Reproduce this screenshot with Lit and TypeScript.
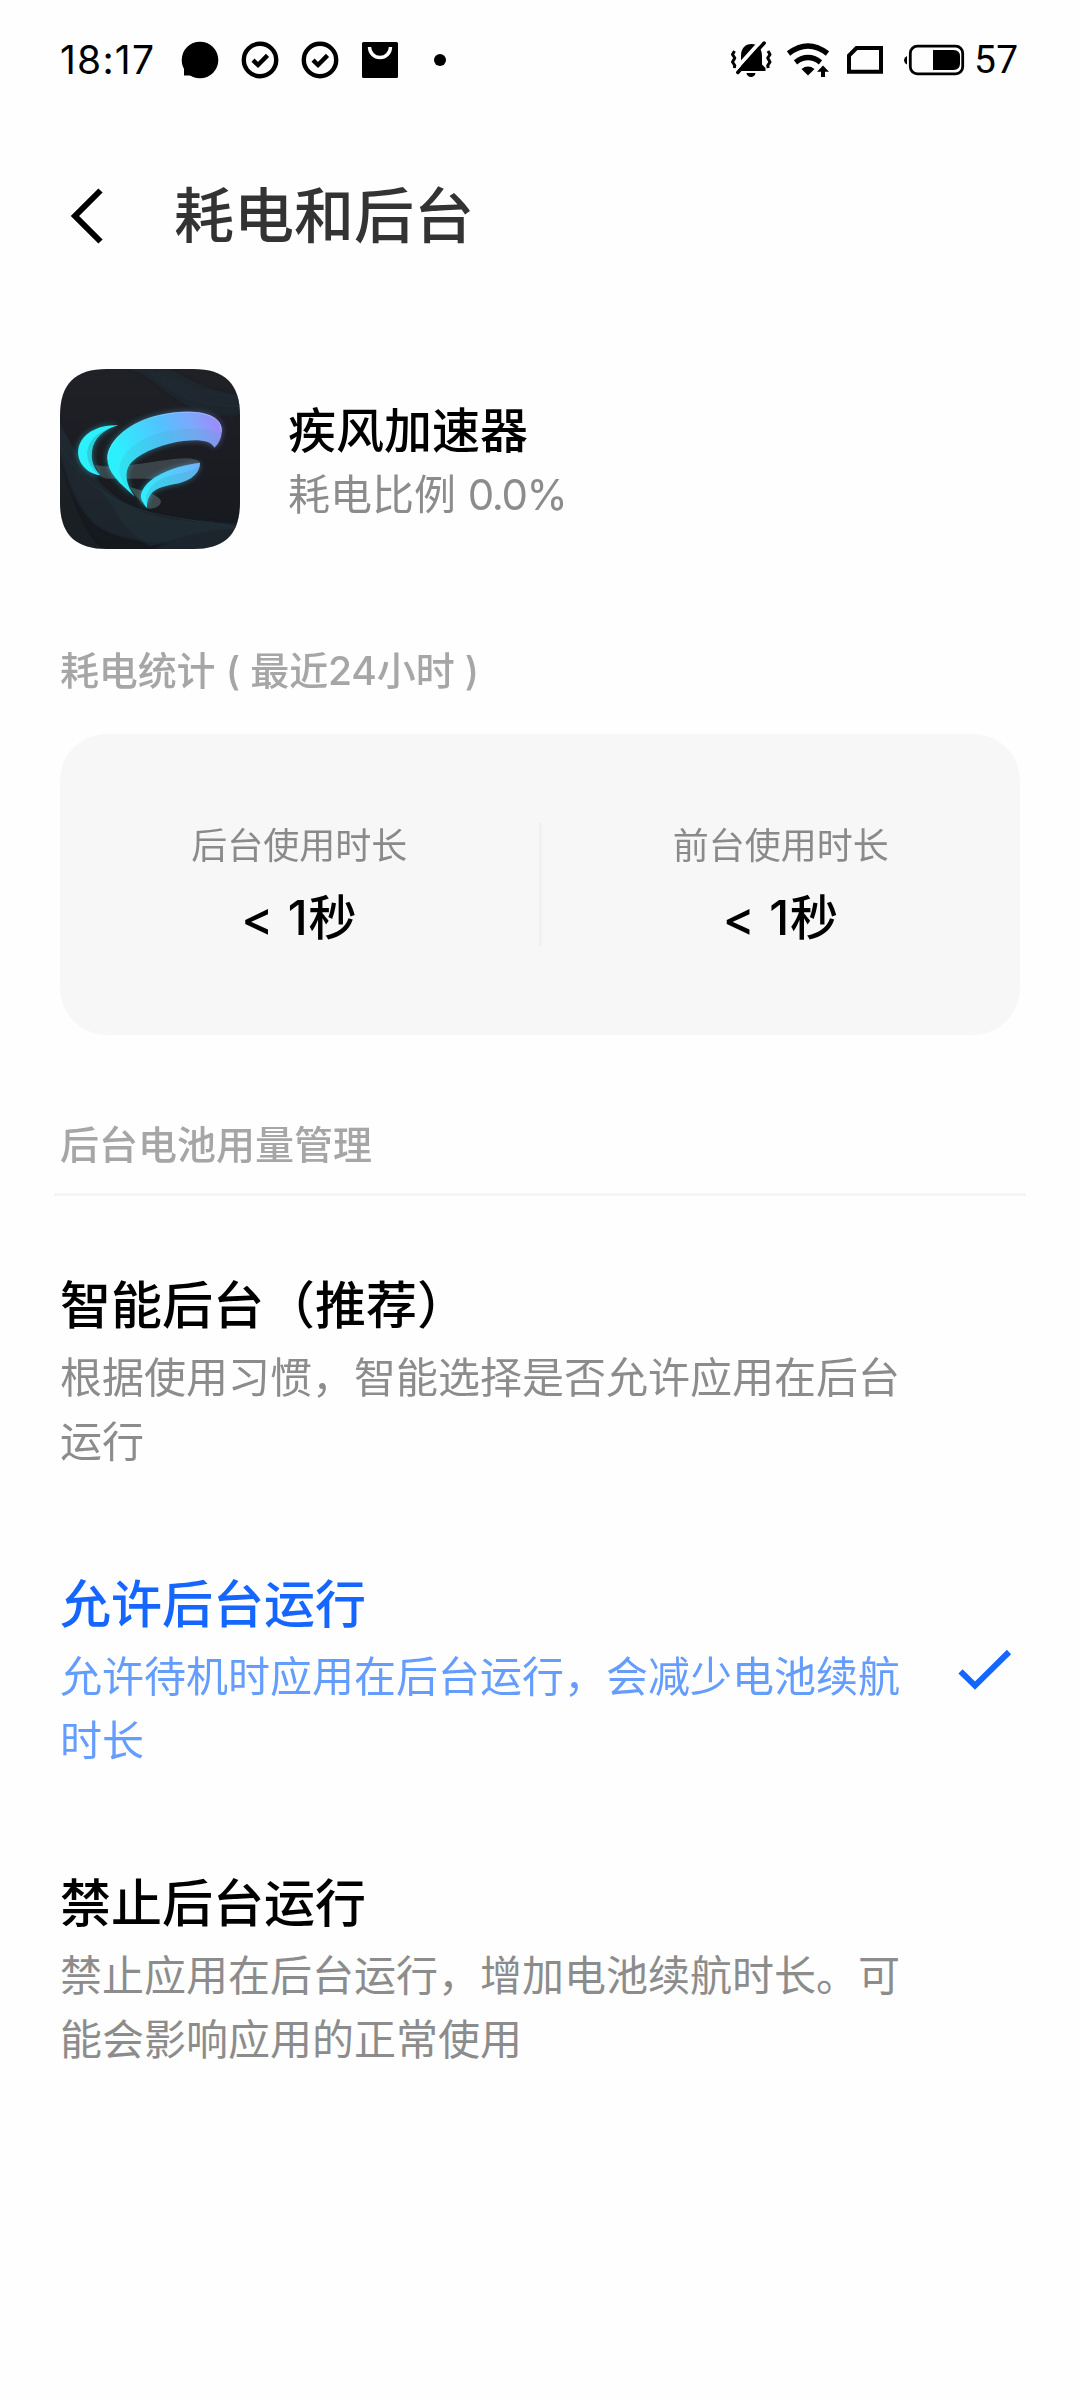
import { LitElement, html, css, svg, nothing } from "lit";
import { customElement, property, state } from "lit/decorators.js";
import { classMap } from "lit/directives/class-map.js";

const font = css`"Inter", "Noto Sans CJK SC", sans-serif`;

@customElement("status-bar")
class StatusBar extends LitElement {
  static styles = css`
    :host {
      display: flex;
      justify-content: space-between;
      height: 120px;
      padding: 0 60px;
      box-sizing: border-box;
      align-items: center;
      font: 400 39px/60px ${font};
      color: #000;
    }
    .side { display: flex; align-items: center; }
    .time { width: 120px; letter-spacing: 1.2px; white-space: nowrap; }
    .level { width: 46px; letter-spacing: 0.3px; white-space: nowrap; font-family: Roboto, sans-serif; }
    svg { display: block; }
  `;
  render() {
    const badge = (cx: number) => svg`
      <circle cx=${cx} cy="60" r="16.2" fill="none" stroke="#000" stroke-width="4.4"/>
      <path d="M${cx - 7} 60.2l5 4.8 9.5-9.6" fill="none" stroke="#000" stroke-width="4.4"/>`;
    return html`
      <div class="side">
        <span class="time">18:17</span>
        <svg width="270" height="60" viewBox="180 30 270 60">
          <circle cx="200" cy="60" r="18.3"/>
          <path d="M184 66v9.500h11z"/>
          ${badge(260)}${badge(320)}
          <rect x="362" y="42" width="36" height="36" rx="1.5"/>
          <path d="M369.500 47a10.500 10.500 0 0 0 21 0" fill="none" stroke="#fff" stroke-width="3.4"/>
          <circle cx="440" cy="60" r="6"/>
        </svg>
      </div>
      <div class="side">
        <svg width="246" height="60" viewBox="728 30 246 60">
          <path d="M741 67V56C741 48.500 745 44 751.500 44S762 48.500 762 56V64.500L765.500 68V71H738V69.500Z"/>
          <path d="M733.500 71.500L762 40" fill="none" stroke="#fefefe" stroke-width="4"/>
          <path d="M737.800 72.500L764.200 43" fill="none" stroke="#000" stroke-width="3.400" stroke-linecap="round"/>
          <path d="M746.500 73h9a4.500 4 0 0 1-9 0z"/>
          <path d="M734.500 51l-2 3.500 2.300 3.500-2.300 4 2.300 3.500-.5 2.500M768 51l2 3.500-2.300 3.500 2.300 4-2.300 3.500.5 2.500" fill="none" stroke="#000" stroke-width="3" stroke-linejoin="round"/>
          <path d="M788.500 53.500q19.500-15 39 0M795.500 62.300q12.500-9.500 25 0" fill="none" stroke="#000" stroke-width="5.400"/>
          <path d="M801.500 69q6.500-4.800 13 0L808 75.500z"/>
          <path d="M823 65.500l6 6.300h-4V77h-4v-5.200h-4z"/>
          <path d="M849 71.700h32v-23.700h-24.500l-7.500 7.500z" fill="none" stroke="#000" stroke-width="4"/>
          <rect x="910.300" y="46.200" width="52.400" height="27.600" rx="7" fill="none" stroke="#000" stroke-width="2.800"/>
          <path d="M933 50h20.500q6.500 0 6.500 6.500v7q0 6.500-6.500 6.500H933z"/>
          <path d="M907 56v8.500q-3-1.500-3-4.250t3-4.250z"/>
        </svg>
        <span class="level">57</span>
      </div>`;
  }
}

@customElement("app-icon")
class AppIcon extends LitElement {
  static styles = css`
    :host { display: block; width: 180px; height: 180px; }
    svg { display: block; }
  `;
  render() {
    const swoosh = svg`
      <path d="M285 440C235 398 202 366 202 325C202 268 278 214 350 197C405 184 470 179 510 196C540 209 548 229 545 250C543 268 535 282 523 293C515 273 480 267 430 273C375 280 310 303 276 335C250 362 256 402 285 440Z" fill="url(#main)"/>
      <path d="M235 226C184 224 143 242 124 272C98 315 126 368 181 376C162 354 152 335 156 303C160 267 190 238 235 226Z" fill="#2cf0fb"/>
      <path d="M480 338C440 343 388 355 345 382C310 405 295 435 306 452C312 462 317 470 321 474C320 446 332 424 358 414C388 402 422 403 450 386C468 374 480 360 480 338Z" fill="url(#leaf)"/>`;
    return html`
      <svg width="180" height="180" viewBox="60 57 540 540">
        <defs>
          <clipPath id="tile"><path d="M200 57H460C555 57 600 102 600 197V457C600 552 555 597 460 597H200C105 597 60 552 60 457V197C60 102 105 57 200 57Z"/></clipPath>
          <linearGradient id="bg" x1="0" y1="0" x2="0" y2="1"><stop offset="0" stop-color="#202127"/><stop offset="1" stop-color="#15181d"/></linearGradient>
          <linearGradient id="main" gradientUnits="userSpaceOnUse" x1="240" y1="320" x2="530" y2="225"><stop offset="0" stop-color="#2cf0fd"/><stop offset=".45" stop-color="#50c4ff"/><stop offset=".78" stop-color="#7fa7fb"/><stop offset="1" stop-color="#9a8dfb"/></linearGradient>
          <linearGradient id="leaf" gradientUnits="userSpaceOnUse" x1="310" y1="450" x2="480" y2="345"><stop offset="0" stop-color="#2cf0fd"/><stop offset="1" stop-color="#72b1fc"/></linearGradient>
          <linearGradient id="wave" x1="0" y1="0" x2="1" y2="0"><stop offset="0" stop-color="#283f4c" stop-opacity=".35"/><stop offset="1" stop-color="#253641" stop-opacity=".4"/></linearGradient>
          <filter id="glow" x="-20%" y="-20%" width="140%" height="140%"><feGaussianBlur stdDeviation="9"/></filter>
          <filter id="soft"><feGaussianBlur stdDeviation="3"/></filter>
        </defs>
        <g clip-path="url(#tile)">
          <rect x="60" y="57" width="540" height="540" fill="url(#bg)"/>
          <g filter="url(#soft)">
            <path d="M240 50C330 60 380 150 480 185C520 200 570 200 610 190V135C500 130 440 75 370 50Z" fill="#22303a" opacity=".35"/>
            <path d="M320 55C370 120 460 180 610 170V135C520 130 440 110 320 55Z" fill="#22303a" opacity=".35"/>
            <path d="M50 200C110 320 180 430 300 480C400 525 500 500 610 535V600H330C430 560 500 560 540 580C400 590 230 580 160 520C90 450 70 330 50 290Z" fill="url(#wave)"/>
            <path d="M50 290C80 400 120 540 200 610H50Z" fill="#20303a" opacity=".2"/>
            <path d="M130 370C220 440 220 520 330 590C430 560 520 530 610 540V520C480 520 360 500 290 474C220 450 170 410 130 370Z" fill="#24323c" opacity=".45"/>
          </g>
          <path d="M60 285C110 380 210 450 290 476C380 505 470 510 600 533" fill="none" stroke="#253640" stroke-width="2"/>
          <path d="M165 345C230 358 330 335 400 327C440 322 480 325 480 340C460 350 430 366 415 386H205C190 384 180 380 180 374Z" fill="#8ba4aa" opacity=".29"/>
          <path d="M270 412C320 425 360 437 363 454C362 469 343 479 321 475C304 458 286 440 270 412Z" fill="#8ba4aa" opacity=".33"/>
          <g filter="url(#glow)" opacity=".48">${swoosh}</g>
          ${swoosh}
          <path d="M285 440C252 405 232 382 240 345C250 295 310 262 370 246C420 235 500 228 544 254C542 270 535 282 523 293C515 273 480 267 430 273C375 280 310 303 276 335C250 362 256 402 285 440Z" fill="#43a9bd" opacity=".2"/>
          <path d="M235 226C180 240 149 264 142 303C139 330 153 360 181 376C162 354 152 335 156 303C160 267 190 238 235 226Z" fill="#2c9eac" opacity=".4"/>
          <path d="M479 348C440 375 385 370 350 395C323 415 312 440 321 474C320 446 332 424 358 414C388 402 422 403 450 386C466 375 478 362 479 348Z" fill="#3ea6c8" opacity=".3"/>
          <path d="M204 330C200 268 278 214 350 198C405 185 470 180 510 197C535 208 545 225 544 245" fill="none" stroke="#a9e9ff" stroke-width="2" opacity=".7"/>
        </g>
      </svg>`;
  }
}

@customElement("usage-card")
class UsageCard extends LitElement {
  @property({ attribute: false }) items: { label: string; value: string }[] = [];
  static styles = css`
    :host {
      display: flex;
      align-items: center;
      height: 301px;
      border-radius: 47px;
      background: #f7f7f7;
      font-family: ${font};
    }
    .cell { flex: 1; text-align: center; }
    .label { font-size: 36px; line-height: 60px; color: #8a8a8a; font-weight: 400; }
    .value { margin-top: 6px; font-size: 48px; line-height: 72px; color: #000; font-weight: 500; letter-spacing: 0.8px; }
    .rule { width: 3px; height: 123px; background: #f0f0f0; }
  `;
  render() {
    return this.items.map(
      (it, i) => html`
        ${i ? html`<div class="rule"></div>` : nothing}
        <div class="cell">
          <div class="label">${it.label}</div>
          <div class="value">${it.value}</div>
        </div>`
    );
  }
}

@customElement("option-row")
class OptionRow extends LitElement {
  @property() heading = "";
  @property() detail = "";
  @property({ type: Boolean }) selected = false;
  static styles = css`
    :host { display: block; font-family: ${font}; }
    .row { display: flex; align-items: center; height: 299px; cursor: pointer; }
    .text { width: 840px; }
    .heading { font-size: 51px; line-height: 80px; font-weight: 500; color: #000; }
    .detail { font-size: 42px; line-height: 64px; color: #8c8c8c; font-weight: 400; }
    .on .heading { color: #1466ff; }
    .on .detail { color: #659dff; }
    svg { display: block; margin: 3px 0 0 56px; }
  `;
  render() {
    return html`
      <div class="row ${classMap({ on: this.selected })}">
        <div class="text">
          <div class="heading">${this.heading}</div>
          <div class="detail">${this.detail}</div>
        </div>
        ${this.selected
          ? html`<svg width="58" height="46" viewBox="956 1647 58 46">
              <path d="M960.500 1671.300L975 1685.600L1009 1652" fill="none" stroke="#1466ff" stroke-width="6"/>
            </svg>`
          : nothing}
      </div>`;
  }
}

@customElement("app-root")
class AppRoot extends LitElement {
  @state() private selected = 1;

  private options = [
    { heading: "智能后台（推荐）", detail: "根据使用习惯，智能选择是否允许应用在后台运行" },
    { heading: "允许后台运行", detail: "允许待机时应用在后台运行，会减少电池续航时长" },
    { heading: "禁止后台运行", detail: "禁止应用在后台运行，增加电池续航时长。可能会影响应用的正常使用" },
  ];

  static styles = css`
    :host {
      display: block;
      width: 1080px;
      height: 2400px;
      overflow: hidden;
      background: #fefefe;
      font-family: ${font};
    }
    .header { display: flex; align-items: center; height: 192px; padding-left: 68px; }
    .title { margin: 0 0 0 70px; font-size: 60px; line-height: 90px; font-weight: 500; color: #333; }
    .body { padding: 0 60px; }
    .app { display: flex; align-items: center; gap: 48px; height: 180px; margin-top: 57px; }
    .info { padding-top: 6px; }
    .name { font-size: 48px; line-height: 66px; font-weight: 500; color: #000; }
    .ratio { font-size: 42px; line-height: 62px; font-weight: 400; color: #8c8c8c; }
    .percent { letter-spacing: -1.4px; }
    .section { font-size: 39px; line-height: 60px; font-weight: 500; color: #a6a6a6; white-space: pre; }
    .stats { margin-top: 92px; letter-spacing: -0.13px; }
    .card { margin-top: 33px; }
    .manage { margin-top: 80px; }
    .line { height: 3px; margin: 18px -6px 0; background: #f5f5f5; }
    .options { margin-top: 24px; }
  `;

  render() {
    return html`
      <status-bar></status-bar>
      <div class="header">
        <svg width="36" height="60" viewBox="68 186 36 60">
          <path d="M100.500 190.500L75 216L100.500 241.500" fill="none" stroke="#000" stroke-width="6"/>
        </svg>
        <h1 class="title">耗电和后台</h1>
      </div>
      <div class="body">
        <div class="app">
          <app-icon></app-icon>
          <div class="info">
            <div class="name">疾风加速器</div>
            <div class="ratio">耗电比例 <span class="percent">0.0%</span></div>
          </div>
        </div>
        <div class="section stats">耗电统计 ( 最近24小时 )</div>
        <usage-card
          class="card"
          .items=${[
            { label: "后台使用时长", value: "< 1秒" },
            { label: "前台使用时长", value: "< 1秒" },
          ]}
        ></usage-card>
        <div class="section manage">后台电池用量管理</div>
        <div class="line"></div>
        <div class="options">
          ${this.options.map(
            (o, i) => html`<option-row
              .heading=${o.heading}
              .detail=${o.detail}
              ?selected=${i === this.selected}
              @click=${() => (this.selected = i)}
            ></option-row>`
          )}
        </div>
      </div>`;
  }
}
